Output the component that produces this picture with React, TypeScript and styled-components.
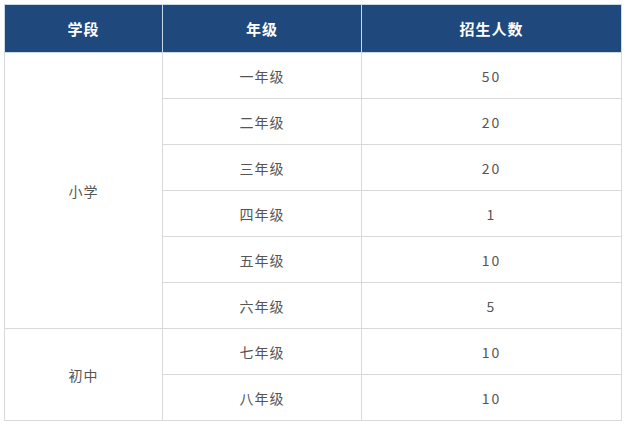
import React from "react";
import styled, { createGlobalStyle } from "styled-components";

const GlobalStyle = createGlobalStyle`
  html, body {
    margin: 0;
    padding: 0;
    background: #ffffff;
  }
  body {
    font-family: "Noto Sans CJK SC", "Noto Sans", sans-serif;
  }
`;

type Group = { stage: string; rows: [string, string][] };

const data: Group[] = [
  {
    stage: "小学",
    rows: [
      ["一年级", "50"],
      ["二年级", "20"],
      ["三年级", "20"],
      ["四年级", "1"],
      ["五年级", "10"],
      ["六年级", "5"],
    ],
  },
  {
    stage: "初中",
    rows: [
      ["七年级", "10"],
      ["八年级", "10"],
    ],
  },
];

function App() {
  return (
    <Page>
      <GlobalStyle />
      <Table>
        <colgroup>
          <col style={{ width: 158 }} />
          <col style={{ width: 199 }} />
          <col style={{ width: 260 }} />
        </colgroup>
        <thead>
          <tr>
            <Th>学段</Th>
            <Th>年级</Th>
            <Th>招生人数</Th>
          </tr>
        </thead>
        <tbody>
          {data.map((g) =>
            g.rows.map(([grade, count], i) => (
              <tr key={g.stage + grade}>
                {i === 0 && <Td rowSpan={g.rows.length}>{g.stage}</Td>}
                <Td>{grade}</Td>
                <Td $num>{count}</Td>
              </tr>
            ))
          )}
        </tbody>
      </Table>
    </Page>
  );
}

export default App;

const Page = styled.div`
  padding: 4px 0 0 4px;
`;

const Table = styled.table`
  border-collapse: collapse;
  table-layout: fixed;
  width: 617px;
`;

const Th = styled.th`
  height: 47px;
  padding: 0;
  background-color: #1f497d;
  color: #ffffff;
  font-size: 15px;
  font-weight: 700;
  letter-spacing: 1px;
  text-align: center;
  border: 1px solid #c9d9ea;
`;

const Td = styled.td<{ $num?: boolean }>`
  height: 45px;
  padding: 0;
  color: #555555;
  font-size: 14px;
  letter-spacing: ${(p) => (p.$num ? "2px" : "1px")};
  text-align: center;
  border: 1px solid #d9d9d9;
`;
